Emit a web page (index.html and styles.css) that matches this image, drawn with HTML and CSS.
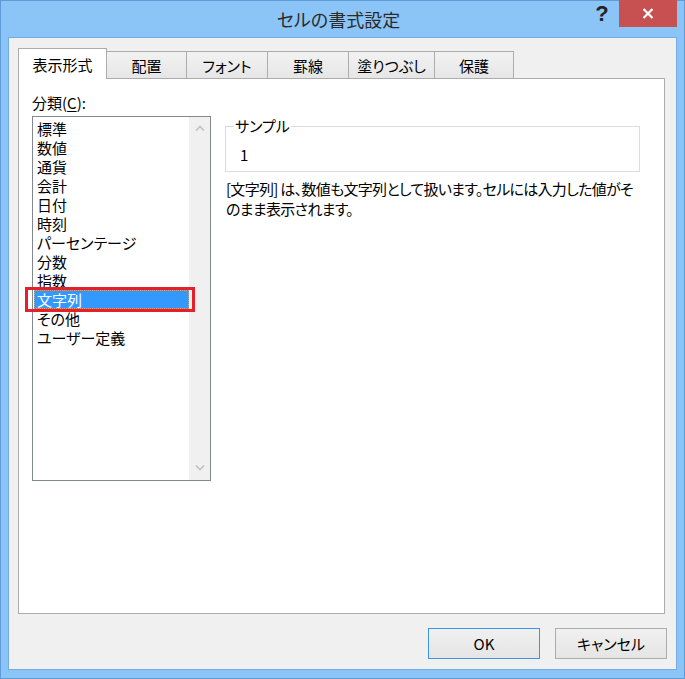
FILE: index.html
```html
<!DOCTYPE html>
<html lang="ja">
<head>
<meta charset="utf-8">
<title>セルの書式設定</title>
<link rel="stylesheet" href="styles.css">
</head>
<body>
<div class="window">
  <div class="titlebar">
    <div></div>
    <div class="title">セルの書式設定</div>
    <div class="controls">
      <span class="help">?</span>
      <span class="close">
        <svg width="12" height="11" viewBox="0 0 12 11"><path d="M1.5 1 L10.5 10 M10.5 1 L1.5 10" stroke="#fff" stroke-width="2.2" fill="none"/></svg>
      </span>
    </div>
  </div>
  <div class="client">
    <div class="tabs">
      <div class="tab active">表示形式</div>
      <div class="tab">配置</div>
      <div class="tab">フォント</div>
      <div class="tab">罫線</div>
      <div class="tab">塗りつぶし</div>
      <div class="tab">保護</div>
    </div>
    <div class="panel">
      <div class="left">
        <div class="label">分類(<u>C</u>):</div>
        <div class="listbox">
          <ul class="items">
            <li>標準</li>
            <li>数値</li>
            <li>通貨</li>
            <li>会計</li>
            <li>日付</li>
            <li>時刻</li>
            <li>パーセンテージ</li>
            <li>分数</li>
            <li>指数</li>
            <li class="selected">文字列<span class="annot"></span></li>
            <li>その他</li>
            <li>ユーザー定義</li>
          </ul>
          <div class="scrollbar">
            <svg width="10" height="6" viewBox="0 0 10 6"><path d="M1 5.5 L5 1.5 L9 5.5" stroke="#c2c2c2" stroke-width="1.6" fill="none"/></svg>
            <svg width="10" height="6" viewBox="0 0 10 6"><path d="M1 0.5 L5 4.5 L9 0.5" stroke="#c2c2c2" stroke-width="1.6" fill="none"/></svg>
          </div>
        </div>
      </div>
      <div class="right">
        <fieldset class="sample">
          <legend>サンプル</legend>
          <div class="sample-value">1</div>
        </fieldset>
        <p class="desc">[文字列] は、数値も文字列として扱います。セルには入力した値がそのまま表示されます。</p>
      </div>
    </div>
    <div class="footer">
      <button class="btn default">OK</button>
      <button class="btn">キャンセル</button>
    </div>
  </div>
</div>
</body>
</html>
```

FILE: styles.css
```css
* { box-sizing: border-box; }
html, body { margin: 0; padding: 0; }
body {
  font-family: "Noto Sans CJK JP", sans-serif;
  font-feature-settings: "palt";
  font-size: 15px;
  color: #000;
  background: #8bc5f7;
}
.window {
  width: 685px;
  height: 679px;
  background: #8bc5f7;
  box-shadow: inset 0 0 0 1px #5f9bd4;
  display: flex;
  flex-direction: column;
}
.titlebar {
  height: 37px;
  flex: none;
  display: grid;
  grid-template-columns: 1fr auto 1fr;
  padding-right: 8px;
}
.title {
  font-size: 18px;
  line-height: 38px;
  color: #2b2b2b;
  white-space: nowrap;
}
.controls {
  display: flex;
  justify-content: flex-end;
  align-items: flex-start;
}
.help {
  width: 24px;
  height: 27px;
  margin-right: 5px;
  font: bold 22px/28px "Liberation Sans", sans-serif;
  color: #222;
  text-align: center;
}
.close {
  width: 58px;
  height: 27px;
  background: #c75050;
  display: flex;
  align-items: center;
  justify-content: center;
}
.client {
  flex: 1;
  margin: 0 8px 9px 8px;
  background: #f0f0f0;
  border: 1px solid #75acdf;
  padding: 10px 11px 10px 9px;
  display: flex;
  flex-direction: column;
}
.tabs {
  display: flex;
  align-items: flex-end;
  height: 30px;
  flex: none;
  position: relative;
  z-index: 1;
}
.tab {
  height: 27px;
  border: 1px solid #acacac;
  border-bottom: none;
  margin-left: -1px;
  background: linear-gradient(#f2f2f2, #e6e6e6);
  display: flex;
  align-items: center;
  justify-content: center;
  white-space: nowrap;
}
.tab:nth-child(1) { width: 89px; margin-left: 0; }
.tab:nth-child(2) { width: 81px; }
.tab:nth-child(3) { width: 82px; }
.tab:nth-child(4) { width: 82px; }
.tab:nth-child(5) { width: 87px; }
.tab:nth-child(6) { width: 80px; }
.tab.active {
  height: 31px;
  margin-bottom: -1px;
  background: #fff;
}
.panel {
  flex: 1;
  background: #fff;
  border: 1px solid #acacac;
  padding: 14px 0 0 13px;
  display: flex;
  align-items: flex-start;
  gap: 14px;
}
.left { width: 179px; flex: none; }
.label { line-height: 20px; margin-bottom: 3px; }
.label u { text-underline-offset: 2px; }
.listbox {
  position: relative;
  display: flex;
  width: 179px;
  height: 365px;
  border: 1px solid #828790;
  background: #fff;
}
.items {
  list-style: none;
  margin: 0;
  padding: 2px 0 0 1px;
  flex: 1;
}
.items li {
  height: 19px;
  line-height: 19px;
  padding-left: 3px;
  position: relative;
  white-space: nowrap;
}
.items li.selected {
  background: #3399ff;
  color: #fff;
  outline: 1px dotted #d9a066;
  outline-offset: -1px;
}
.annot {
  position: absolute;
  top: -3px;
  bottom: -3px;
  left: -9px;
  right: -6px;
  border: 3px solid #e4212b;
}
.scrollbar {
  width: 21px;
  flex: none;
  background: #f0f0f0;
  display: flex;
  flex-direction: column;
  justify-content: space-between;
  align-items: center;
  padding: 8px 0 9px 1px;
}
.scrollbar svg { display: block; }
.right { width: 415px; flex: none; }
.sample {
  margin: 24px 0 0;
  padding: 0 0 6px 8px;
  border: 1px solid #dcdcdc;
  min-width: 0;
}
.sample legend {
  padding: 0 1px;
  line-height: 18px;
}
.sample-value {
  margin-top: 10px;
  padding-left: 6px;
  line-height: 20px;
}
.desc {
  margin: 7px 0 0;
  padding-left: 1px;
  max-width: 410px;
  line-height: 20px;
  letter-spacing: -0.7px;
}
.footer {
  flex: none;
  display: flex;
  justify-content: flex-end;
  gap: 15px;
  margin: 14px -2px 0 0;
}
.btn {
  width: 112px;
  height: 31px;
  border: 1px solid #acacac;
  background: linear-gradient(#f0f0f0, #e5e5e5);
  font-family: inherit;
  font-size: 15px;
  font-feature-settings: "palt";
  color: #000;
  padding: 0;
}
.btn.default { border-color: #3c95e8; }
```
